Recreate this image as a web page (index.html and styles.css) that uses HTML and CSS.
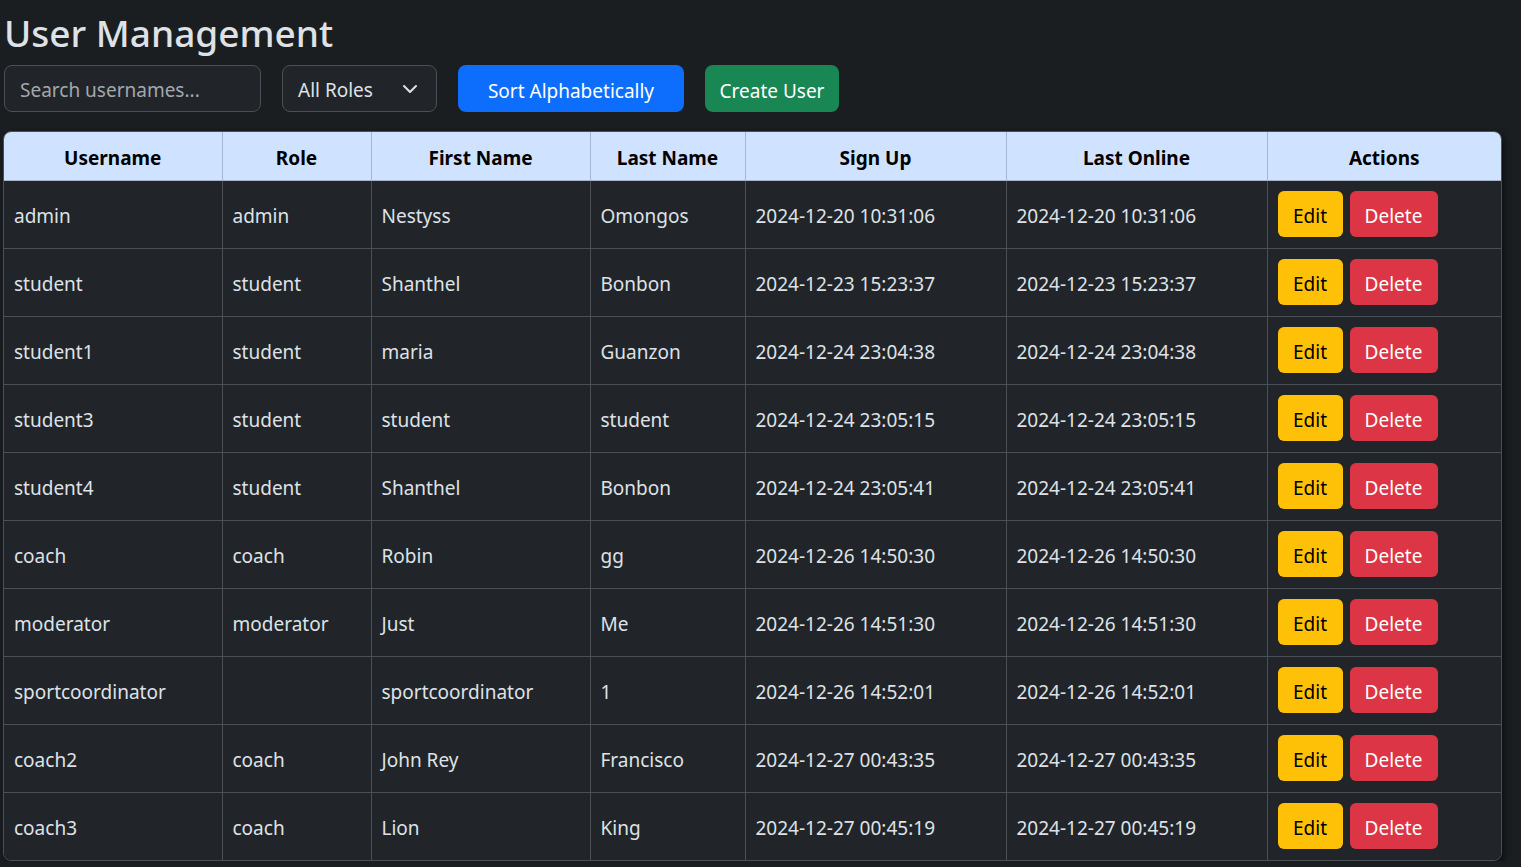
FILE: index.html
```html
<!DOCTYPE html>
<html lang="en">
<head>
<meta charset="utf-8">
<title>User Management</title>
<link rel="stylesheet" href="styles.css">
</head>
<body>
<div class="page">
  <h1 class="title">User Management</h1>
  <div class="controls">
    <input class="field search" type="text" placeholder="Search usernames...">
    <div class="field select">
      <span>All Roles</span>
      <svg class="chev" width="16" height="16" viewBox="0 0 16 16"><path d="M2 5l6 6 6-6" fill="none" stroke="#dee2e6" stroke-width="2" stroke-linecap="round" stroke-linejoin="round"/></svg>
    </div>
    <button class="btn btn-primary">Sort Alphabetically</button>
    <button class="btn btn-success">Create User</button>
  </div>
  <div class="table-wrap">
    <table class="users">
      <colgroup>
        <col style="width:218px"><col style="width:149px"><col style="width:219px"><col style="width:155px"><col style="width:261px"><col style="width:261px"><col>
      </colgroup>
      <thead>
        <tr><th>Username</th><th>Role</th><th>First Name</th><th>Last Name</th><th>Sign Up</th><th>Last Online</th><th>Actions</th></tr>
      </thead>
      <tbody>
        <tr><td>admin</td><td>admin</td><td>Nestyss</td><td>Omongos</td><td>2024-12-20 10:31:06</td><td>2024-12-20 10:31:06</td><td class="actions"><button class="sbtn edit">Edit</button><button class="sbtn del">Delete</button></td></tr>
        <tr><td>student</td><td>student</td><td>Shanthel</td><td>Bonbon</td><td>2024-12-23 15:23:37</td><td>2024-12-23 15:23:37</td><td class="actions"><button class="sbtn edit">Edit</button><button class="sbtn del">Delete</button></td></tr>
        <tr><td>student1</td><td>student</td><td>maria</td><td>Guanzon</td><td>2024-12-24 23:04:38</td><td>2024-12-24 23:04:38</td><td class="actions"><button class="sbtn edit">Edit</button><button class="sbtn del">Delete</button></td></tr>
        <tr><td>student3</td><td>student</td><td>student</td><td>student</td><td>2024-12-24 23:05:15</td><td>2024-12-24 23:05:15</td><td class="actions"><button class="sbtn edit">Edit</button><button class="sbtn del">Delete</button></td></tr>
        <tr><td>student4</td><td>student</td><td>Shanthel</td><td>Bonbon</td><td>2024-12-24 23:05:41</td><td>2024-12-24 23:05:41</td><td class="actions"><button class="sbtn edit">Edit</button><button class="sbtn del">Delete</button></td></tr>
        <tr><td>coach</td><td>coach</td><td>Robin</td><td>gg</td><td>2024-12-26 14:50:30</td><td>2024-12-26 14:50:30</td><td class="actions"><button class="sbtn edit">Edit</button><button class="sbtn del">Delete</button></td></tr>
        <tr><td>moderator</td><td>moderator</td><td>Just</td><td>Me</td><td>2024-12-26 14:51:30</td><td>2024-12-26 14:51:30</td><td class="actions"><button class="sbtn edit">Edit</button><button class="sbtn del">Delete</button></td></tr>
        <tr><td>sportcoordinator</td><td></td><td>sportcoordinator</td><td>1</td><td>2024-12-26 14:52:01</td><td>2024-12-26 14:52:01</td><td class="actions"><button class="sbtn edit">Edit</button><button class="sbtn del">Delete</button></td></tr>
        <tr><td>coach2</td><td>coach</td><td>John Rey</td><td>Francisco</td><td>2024-12-27 00:43:35</td><td>2024-12-27 00:43:35</td><td class="actions"><button class="sbtn edit">Edit</button><button class="sbtn del">Delete</button></td></tr>
        <tr><td>coach3</td><td>coach</td><td>Lion</td><td>King</td><td>2024-12-27 00:45:19</td><td>2024-12-27 00:45:19</td><td class="actions"><button class="sbtn edit">Edit</button><button class="sbtn del">Delete</button></td></tr>
      </tbody>
    </table>
  </div>
</div>
</body>
</html>
```

FILE: styles.css
```css
* { box-sizing: border-box; }
html, body {
  margin: 0;
  background: #1b1e21;
  color: #dee2e6;
  font-family: "Noto Sans", "Open Sans", sans-serif;
}
.page {
  padding: 8px 20px 0 3px;
}
.title {
  margin: 0 0 7px 1px;
  font-size: 37px;
  font-weight: 500;
  line-height: 50px;
  color: #dee2e6;
}
.controls {
  display: flex;
  align-items: center;
  gap: 21px;
  padding-left: 1px;
}
.field {
  height: 47px;
  border: 1px solid #495057;
  border-radius: 8px;
  background: #212529;
  color: #dee2e6;
  font-family: inherit;
  font-size: 19px;
}
.search {
  width: 257px;
  padding: 3px 15px 0;
  outline: none;
}
.search::placeholder { color: #a3a8ad; }
.select {
  width: 155px;
  display: flex;
  align-items: center;
  justify-content: space-between;
  padding: 3px 18px 0 15px;
}
.chev { display: block; margin-top: -3px; }
.btn {
  height: 47px;
  border: none;
  border-radius: 8px;
  color: #fff;
  font-family: inherit;
  font-size: 19px;
  padding: 4px 0 0;
  cursor: pointer;
}
.btn-primary { background: #0d6efd; width: 226px; }
.btn-success { background: #198754; width: 134px; }
.table-wrap {
  margin-top: 19px;
  width: 1499px;
  border-radius: 8px;
  overflow: hidden;
  border: 1px solid #495057;
  box-shadow: 2px 3px 6px rgba(0,0,0,.55);
}
.users {
  width: 100%;
  border-collapse: collapse;
  table-layout: fixed;
  background: #212529;
  font-size: 19px;
}
.users th {
  background: #cfe2ff;
  color: #000;
  font-weight: 700;
  height: 48px;
  padding: 4px 10px 0;
  text-align: center;
  border-left: 1px solid #a6b5cc;
  border-bottom: 1px solid #a6b5cc;
}
.users th:first-child, .users td:first-child { border-left: none; }
.users td {
  height: 68px;
  padding: 4px 10px 0;
  border-left: 1px solid #495057;
  border-top: 1px solid #495057;
  color: #dee2e6;
  white-space: nowrap;
}
.users tbody tr:first-child td { border-top: none; }
.users td.actions { font-size: 0; padding: 0 10px; }
.sbtn {
  height: 46px;
  border: none;
  border-radius: 6px;
  font-family: inherit;
  font-size: 19px;
  padding: 4px 0 0;
  vertical-align: middle;
  cursor: pointer;
}
.sbtn.edit { width: 65px; }
.sbtn.del { width: 88px; }
.sbtn + .sbtn { margin-left: 7px; }
.edit { background: #ffc107; color: #000; }
.del { background: #dc3545; color: #fff; }
```
